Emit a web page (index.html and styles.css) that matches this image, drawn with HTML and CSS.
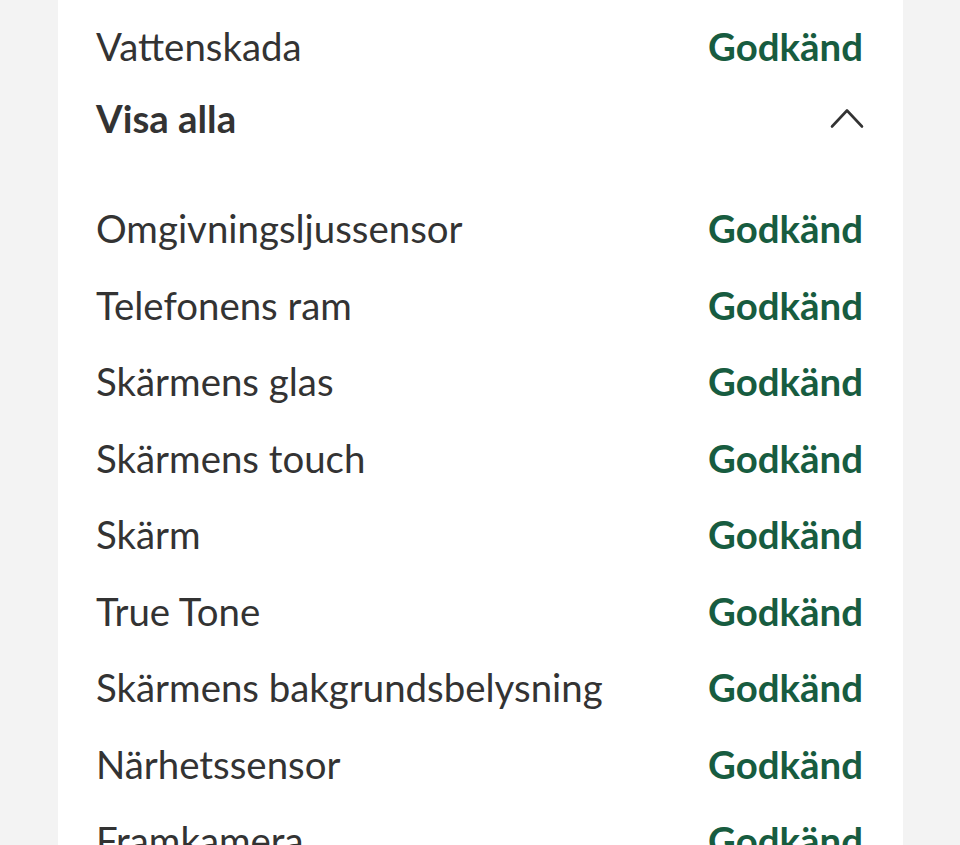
FILE: index.html
```html
<!DOCTYPE html>
<html lang="sv">
<head>
<meta charset="utf-8">
<link rel="stylesheet" href="styles.css">
</head>
<body>
<div class="card">
  <div class="row first"><span class="label">Vattenskada</span><span class="status">Godkänd</span></div>
  <div class="toggle"><span class="toggle-label">Visa alla</span>
    <svg class="chevron" width="34" height="22" viewBox="0 0 34 22"><polyline points="2,19.5 17,3.5 32,19.5" fill="none" stroke="#333" stroke-width="2.6" stroke-linecap="round" stroke-linejoin="round"/></svg>
  </div>
  <div class="list">
    <div class="row"><span class="label">Omgivningsljussensor</span><span class="status">Godkänd</span></div>
    <div class="row"><span class="label">Telefonens ram</span><span class="status">Godkänd</span></div>
    <div class="row"><span class="label">Skärmens glas</span><span class="status">Godkänd</span></div>
    <div class="row"><span class="label">Skärmens touch</span><span class="status">Godkänd</span></div>
    <div class="row"><span class="label">Skärm</span><span class="status">Godkänd</span></div>
    <div class="row"><span class="label">True Tone</span><span class="status">Godkänd</span></div>
    <div class="row"><span class="label">Skärmens bakgrundsbelysning</span><span class="status">Godkänd</span></div>
    <div class="row"><span class="label">Närhetssensor</span><span class="status">Godkänd</span></div>
    <div class="row"><span class="label">Framkamera</span><span class="status">Godkänd</span></div>
  </div>
</div>
</body>
</html>
```

FILE: styles.css
```css
html, body {
  margin: 0;
  padding: 0;
  background: #f3f3f3;
  height: 845px;
  overflow: hidden;
}
body {
  font-family: Lato, "Open Sans", sans-serif;
  color: #333333;
}
.card {
  margin-left: 58px;
  width: 845px;
  box-sizing: border-box;
  padding: 8px 40px 0 38px;
  background: #ffffff;
  min-height: 845px;
}
.row {
  display: flex;
  justify-content: space-between;
  align-items: center;
  height: 76.5px;
  font-size: 38.4px;
}
.row.first {
  height: 76px;
}
.label {
  font-weight: 400;
}
.status {
  font-weight: 700;
  color: #175c40;
}
.toggle {
  display: flex;
  justify-content: space-between;
  align-items: center;
  height: 68px;
  font-size: 38.4px;
}
.toggle-label {
  font-weight: 700;
}
.chevron {
  display: block;
  margin-right: -1px;
}
.list {
  padding-top: 37.75px;
}
```
